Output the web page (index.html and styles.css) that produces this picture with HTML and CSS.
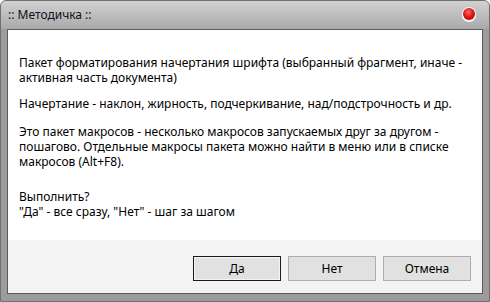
FILE: index.html
```html
<!DOCTYPE html>
<html lang="ru">
<head>
<meta charset="utf-8">
<link rel="stylesheet" href="styles.css">
</head>
<body>
<div class="window">
  <div class="titlebar">
    <span class="title">:: Методичка ::</span>
    <span class="close"></span>
  </div>
  <div class="client">
    <div class="message">
      <p class="p1">Пакет форматирования начертания шрифта (выбранный фрагмент, иначе -<br>активная часть документа)</p>
      <p class="p2">Начертание - наклон, жирность, подчеркивание, над/подстрочность и др.</p>
      <p class="p3">Это пакет макросов - несколько макросов запускаемых друг за другом -<br>пошагово. Отдельные макросы пакета можно найти в меню или в списке<br>макросов (Alt+F8).</p>
      <p class="p4">Выполнить?<br>"Да" - все сразу, "Нет" - шаг за шагом</p>
    </div>
    <div class="buttons">
      <button class="btn btn-default">Да</button>
      <button class="btn">Нет</button>
      <button class="btn">Отмена</button>
    </div>
  </div>
</div>
</body>
</html>
```
FILE: styles.css
```css
html, body {
  margin: 0;
  padding: 0;
  background: #ffffff;
}
.window {
  width: 490px;
  height: 302px;
  box-sizing: border-box;
  border: 1px solid #707070;
  border-radius: 6px 6px 0 0;
  background: #9c9c9c;
  display: flex;
  flex-direction: column;
  font-family: "Noto Sans", "DejaVu Sans", sans-serif;
  font-size: 12px;
  color: #000;
}
.titlebar {
  height: 28px;
  flex: none;
  display: flex;
  align-items: center;
  justify-content: space-between;
  padding: 0 14px 0 7px;
  border-radius: 5px 5px 0 0;
  background: linear-gradient(#d2d2d2, #b9b9b9 60%, #a9a9a9);
}
.title {
  font-size: 12px;
  color: #101020;
  padding-bottom: 2px;
}
.close {
  width: 12px;
  height: 12px;
  border-radius: 50%;
  background: radial-gradient(circle at 45% 35%, #ff6a6a 0, #e01818 45%, #a80000 100%);
  box-shadow: 0 0 0 1px #f4f4f4, 0 1px 0 1px #ffffff;
  margin-top: -2px;
}
.client {
  flex: 1;
  margin: 0 6px 7px 6px;
  border: 1px solid #5a5a5a;
  display: flex;
  flex-direction: column;
  background: #f3f3f3;
}
.message {
  flex: 1;
  background: #ffffff;
  padding: 25px 10px 0 11px;
  line-height: 15px;
}
.message p {
  margin: 0;
}
.message .p2 { margin-top: 11px; }
.message .p3 { margin-top: 13px; }
.message .p4 { margin-top: 20px; }
.buttons {
  height: 53px;
  flex: none;
  display: flex;
  justify-content: flex-end;
  align-items: center;
  gap: 7px;
  padding: 0 11px 0 0;
}
.btn {
  width: 88px;
  height: 25px;
  box-sizing: border-box;
  background: #e1e1e1;
  border: 1px solid #adadad;
  font-family: "Noto Sans", "DejaVu Sans", sans-serif;
  font-size: 12px;
  color: #000;
  padding: 0;
  margin-top: 3px;
}
.btn-default {
  border: 1px solid #1a1a1a;
  box-shadow: inset 0 0 0 1px #f4f4f4;
}
```
